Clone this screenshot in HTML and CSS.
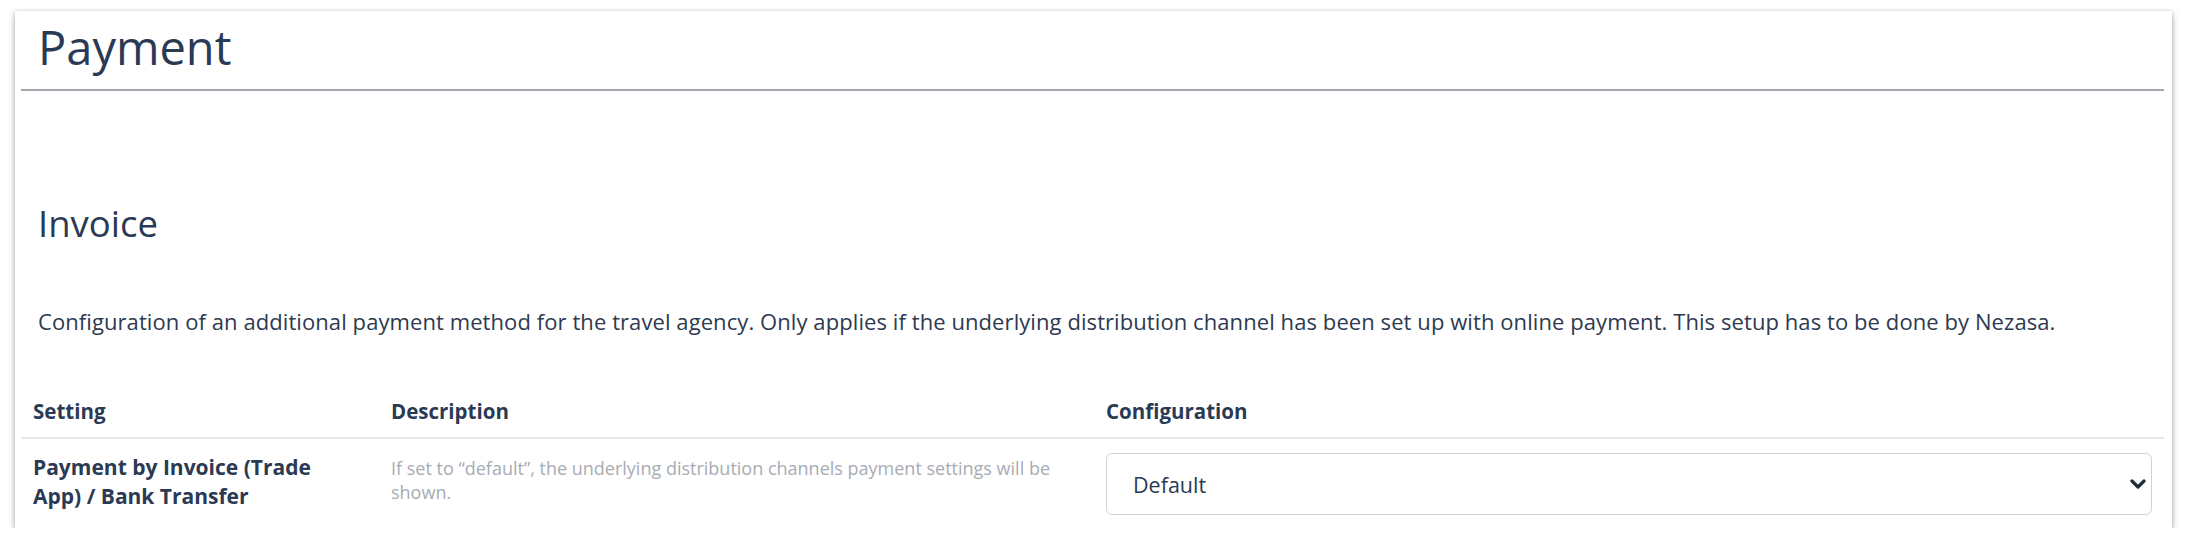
FILE: index.html
```html
<!DOCTYPE html>
<html lang="en">
<head>
<meta charset="utf-8">
<title>Payment</title>
<link rel="stylesheet" href="styles.css">
</head>
<body>
<div class="page">
  <section class="card">
    <h1 class="page-title">Payment</h1>
    <h2 class="section-title">Invoice</h2>
    <p class="section-desc">Configuration of an additional payment method for the travel agency. Only applies if the underlying distribution channel has been set up with online payment. This setup has to be done by Nezasa.</p>
    <table class="settings">
      <thead>
        <tr>
          <th class="col-setting">Setting</th>
          <th class="col-desc">Description</th>
          <th class="col-config">Configuration</th>
        </tr>
      </thead>
      <tbody>
        <tr>
          <td class="setting-name">Payment by Invoice (Trade App) / Bank Transfer</td>
          <td class="setting-desc"><div class="desc-text">If set to “default”, the underlying distribution channels payment settings will be shown.</div></td>
          <td class="setting-config">
            <div class="select-wrap">
              <select class="select">
                <option>Default</option>
              </select>
              <svg class="chevron" viewBox="0 0 16 10" width="16" height="10" aria-hidden="true"><path d="M2 2 L8 8 L14 2" fill="none" stroke="#1f2b3d" stroke-width="3.2" stroke-linecap="round" stroke-linejoin="round"/></svg>
            </div>
          </td>
        </tr>
      </tbody>
    </table>
  </section>
</div>
</body>
</html>
```

FILE: styles.css
```css
* { box-sizing: border-box; }

html, body {
  margin: 0;
  padding: 0;
  background: #ffffff;
}

body {
  font-family: "Open Sans", Lato, "Liberation Sans", sans-serif;
  color: #2e3a50;
}

.page {
  padding: 11px 16px 0 15px;
}

.card {
  background: #ffffff;
  box-shadow: 0 3px 7px rgba(0, 0, 0, 0.32), 0 0 3px rgba(0, 0, 0, 0.12);
  padding: 0 8px 0 6px;
}

.page-title {
  margin: 0;
  padding: 8px 0 14px 17px;
  font-size: 47px;
  line-height: 56px;
  font-weight: 400;
  color: #2b3a54;
  border-bottom: 2px solid #a2a7ae;
}

.section-title {
  margin: 110px 0 0;
  padding-left: 17px;
  font-size: 36.5px;
  line-height: 44px;
  font-weight: 400;
  color: #2b3a54;
}

.section-desc {
  margin: 62px 0 0;
  padding-left: 17px;
  font-size: 22px;
  line-height: 28px;
  letter-spacing: 0.08px;
  color: #2e3a50;
}

.settings {
  width: 100%;
  margin-top: 50px;
  border-collapse: collapse;
  table-layout: fixed;
}

.settings th {
  text-align: left;
  font-size: 20.5px;
  line-height: 28px;
  font-weight: 700;
  color: #2b3a54;
  padding: 12px 12px;
  border-bottom: 2px solid #e6e7e9;
}

.col-setting { width: 358px; }
.col-desc { width: 715px; }

.settings td {
  vertical-align: top;
  padding: 14px 12px 13px;
}

.settings td.setting-name {
  padding-right: 60px;
  font-size: 21px;
  line-height: 29px;
  font-weight: 700;
  color: #2b3a54;
}

.desc-text {
  margin-top: 3px;
  font-size: 18px;
  line-height: 24px;
  color: #a7acb4;
}

.select-wrap {
  position: relative;
}

.select {
  display: block;
  width: 100%;
  height: 62px;
  appearance: none;
  -webkit-appearance: none;
  background: #ffffff;
  border: 1px solid #cfd3d8;
  border-radius: 6px;
  padding: 0 40px 0 26px;
  font-family: inherit;
  font-size: 21.5px;
  color: #2b3a54;
}

.chevron {
  position: absolute;
  right: 6px;
  top: 26px;
  pointer-events: none;
}
```
